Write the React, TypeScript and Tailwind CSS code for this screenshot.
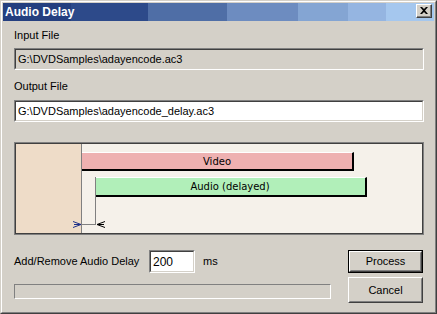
import React from "react";

const bands = [
  "w-[68px] bg-[#243f7f]",
  "w-[77px] bg-[#2d4a8a]",
  "w-[79px] bg-[#4f6ea6]",
  "w-[71px] bg-[#6d8cc0]",
  "w-[50px] bg-[#84a5d3]",
  "w-[38px] bg-[#95b5e1]",
  "flex-1 bg-[#a5c7ee]",
];

function Sunken({
  className,
  children,
}: {
  className?: string;
  children?: React.ReactNode;
}) {
  // classic 2px sunken edge
  return (
    <div className={`border border-t-[#808080] border-l-[#808080] border-b-white border-r-white ${className ?? ""}`}>
      <div className="h-full w-full border border-t-[#404040] border-l-[#404040] border-b-[#d4d0c8] border-r-[#d4d0c8] flex items-center overflow-hidden">
        {children}
      </div>
    </div>
  );
}

function Button({
  label,
  isDefault,
  className,
}: {
  label: string;
  isDefault?: boolean;
  className?: string;
}) {
  const inner = (
    <div className="h-full w-full border border-t-white border-l-white border-b-[#404040] border-r-[#404040]">
      <div className="h-full w-full border border-t-[#d4d0c8] border-l-[#d4d0c8] border-b-[#808080] border-r-[#808080] flex items-center justify-center">
        {label}
      </div>
    </div>
  );
  return (
    <div className={`${isDefault ? "border border-black" : ""} ${className ?? ""}`}>
      {inner}
    </div>
  );
}

export default function App() {
  return (
    <div
      className="w-[437px] h-[314px] bg-[#d4d0c8] text-[11px] text-black border border-t-[#d4d0c8] border-l-[#d4d0c8] border-b-[#404040] border-r-[#404040]"
      style={{ fontFamily: '"Liberation Sans", Arial, sans-serif' }}
    >
      <div className="h-full w-full border border-t-white border-l-white border-b-[#808080] border-r-[#808080] p-px flex flex-col">
        {/* Title bar */}
        <div className="relative h-[18px] flex shrink-0">
          {bands.map((b, i) => (
            <div key={i} className={`h-full ${b}`} />
          ))}
          <div className="absolute left-[2px] top-0 h-full flex items-center text-white font-bold text-[12px] leading-none">
            Audio Delay
          </div>
          <div className="absolute right-[2px] top-[1px] w-[16px] h-[14px] bg-[#d4d0c8] border border-t-white border-l-white border-b-[#404040] border-r-[#404040]">
            <div className="h-full w-full border-b border-r border-[#808080] flex items-center justify-center">
              <svg width="8" height="7" viewBox="0 0 8 7">
                <path d="M0 0h2l2 2 2-2h2L5 3.5 8 7H6L4 5 2 7H0l3-3.5z" fill="#000" />
              </svg>
            </div>
          </div>
        </div>

        {/* Content */}
        <div className="flex flex-col pl-[11px] pr-[10px]">
          <div className="mt-[8px] h-[13px] leading-[13px]">Input File</div>
          <Sunken className="mt-[6px] h-[22px] bg-[#d4d0c8]">
            <span className="pl-[2px]">G:\DVDSamples\adayencode.ac3</span>
          </Sunken>

          <div className="mt-[10px] h-[13px] leading-[13px]">Output File</div>
          <Sunken className="mt-[7px] h-[22px] bg-white">
            <span className="pl-[2px]">G:\DVDSamples\adayencode_delay.ac3</span>
          </Sunken>

          {/* Timeline diagram */}
          <div className="mt-[20px] h-[93px] border border-[#808080]">
            <div
              className="relative h-full w-full border border-[#404040] bg-[#f5f1ea] overflow-hidden text-[10px]"
              style={{ fontFamily: '"DejaVu Sans", Verdana, sans-serif' }}
            >
              <div className="absolute left-0 top-0 bottom-0 w-[66px] bg-[#eedcc8] border-r border-[#808080]" />
              <div className="absolute left-[66px] top-[8px] w-[272px] h-[19px] bg-[#eeb1b1] border-t border-white border-b-2 border-b-black border-r-2 border-r-black flex items-center justify-center">
                Video
              </div>
              <div className="absolute left-[79px] top-[33px] w-[272px] h-[20px] bg-[#b1efb9] border-t border-white border-b-2 border-b-black border-r-2 border-r-black flex items-center justify-center">
                Audio (delayed)
              </div>
              <svg className="absolute inset-0" width="406" height="89">
                <line x1="79.5" y1="33" x2="79.5" y2="81" stroke="#808080" />
                <line x1="66" y1="80.5" x2="79" y2="80.5" stroke="#808080" />
                <path d="M57 77.5 L65 80.5 L57 83.5 M58 80.5 H65" stroke="#1c2f8a" fill="none" />
                <path d="M89 77.5 L81 80.5 L89 83.5 M81 80.5 H88" stroke="#000" fill="none" />
              </svg>
            </div>
          </div>

          {/* Bottom controls */}
          <div className="mt-[15px] flex">
            <div className="w-[317px] flex flex-col">
              <div className="h-[23px] flex items-center">
                <span className="w-[135px]">Add/Remove Audio Delay</span>
                <Sunken className="w-[46px] h-[23px] bg-white">
                  <span className="pl-[2px] text-[12px]">200</span>
                </Sunken>
                <span className="ml-[8px]">ms</span>
              </div>
              <div className="mt-[11px] h-[15px] border border-t-[#808080] border-l-[#808080] border-b-white border-r-white" />
            </div>
            <div className="ml-[17px] flex flex-col">
              <Button label="Process" isDefault className="w-[75px] h-[23px]" />
              <Button label="Cancel" className="mt-[4px] w-[75px] h-[26px]" />
            </div>
          </div>
        </div>
      </div>
    </div>
  );
}
